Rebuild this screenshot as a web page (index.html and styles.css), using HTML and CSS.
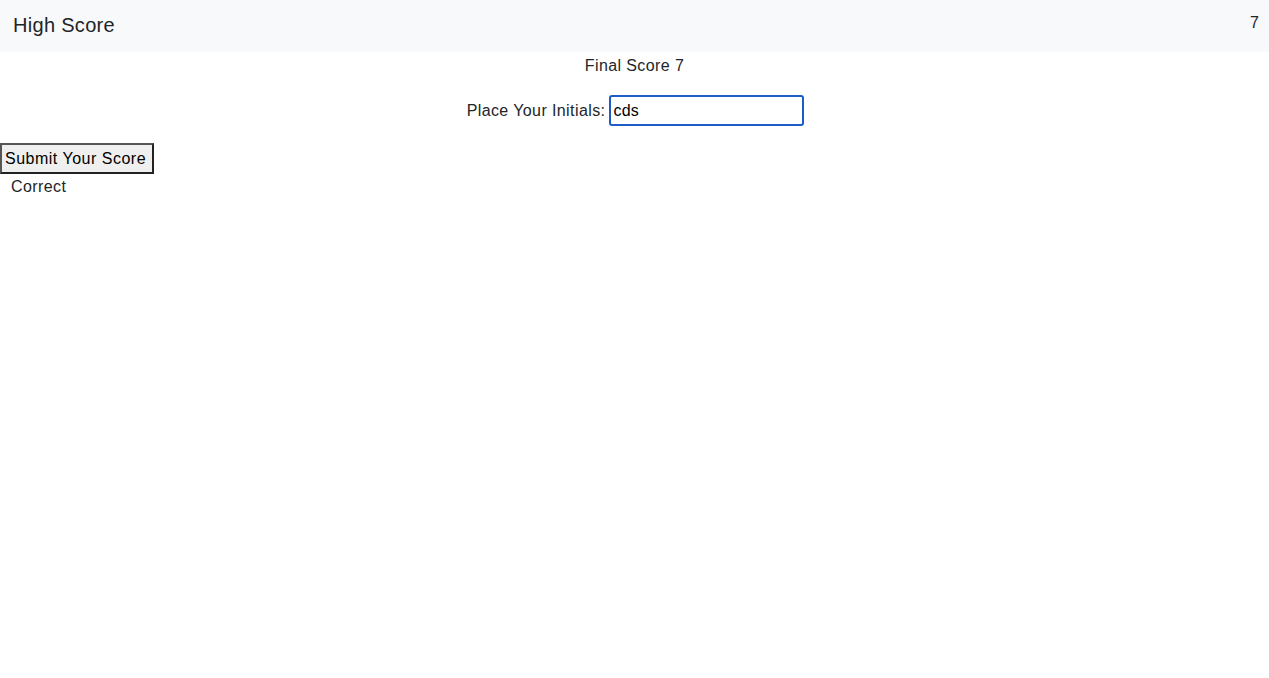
FILE: index.html
```html
<!DOCTYPE html>
<html>
<head>
<meta charset="utf-8">
<link rel="stylesheet" href="styles.css">
</head>
<body>
<nav class="navbar">
  <span class="brand">High Score</span>
  <span class="score">7</span>
</nav>
<main>
  <p class="final">Final Score 7</p>
  <div class="initials">
    <label for="ini">Place Your Initials:</label>
    <input id="ini" class="field" type="text" value="cds">
  </div>
  <button class="submit">Submit Your Score</button>
  <div class="result">Correct</div>
</main>
</body>
</html>
```
FILE: styles.css
```css
html, body {
  margin: 0;
  padding: 0;
  background: #fff;
  font-family: "Liberation Sans", Arial, sans-serif;
  font-size: 16px;
  line-height: 24px;
  color: #212529;
  letter-spacing: 0.4px;
}
.navbar {
  height: 52px;
  box-sizing: border-box;
  background: #f8f9fa;
  display: flex;
  justify-content: space-between;
  align-items: flex-start;
  padding: 10px 10px 0 13px;
}
.brand {
  font-size: 20px;
  line-height: 30px;
  letter-spacing: 0.3px;
}
.score {
  line-height: 24px;
  padding-top: 1px;
  letter-spacing: 0;
}
main {
  display: flex;
  flex-direction: column;
  align-items: flex-start;
}
.final {
  margin: 2px 0 0;
  align-self: stretch;
  text-align: center;
}
.initials {
  align-self: stretch;
  display: flex;
  justify-content: center;
  align-items: center;
  gap: 4px;
  margin-top: 17px;
  padding-left: 2px;
}
.field {
  width: 195px;
  height: 31px;
  box-sizing: border-box;
  border: 2px solid #1c5cc8;
  border-radius: 3px;
  padding: 0 2px;
  font-family: "Liberation Sans", Arial, sans-serif;
  font-size: 16px;
  letter-spacing: 0.3px;
  color: #000;
  outline: none;
}
.submit {
  margin-top: 17px;
  height: 31px;
  box-sizing: border-box;
  padding: 0 6px 0 3px;
  border: 2px solid #222;
  border-top-color: #555;
  border-left-color: #555;
  background: #efefef;
  font-family: "Liberation Sans", Arial, sans-serif;
  font-size: 16px;
  letter-spacing: 0.5px;
  color: #000;
  border-radius: 0;
}
.result {
  margin-left: 11px;
  margin-top: 1px;
}
```
